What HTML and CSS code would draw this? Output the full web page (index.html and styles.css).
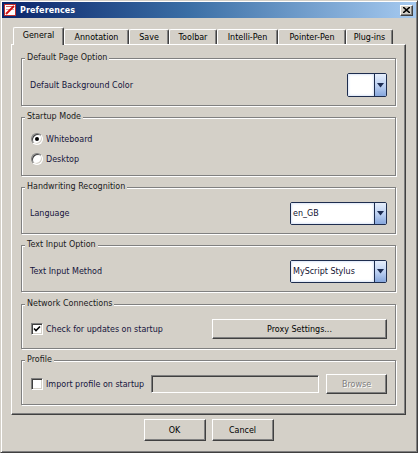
FILE: index.html
```html
<!DOCTYPE html>
<html>
<head>
<meta charset="utf-8">
<title>Preferences</title>
<link rel="stylesheet" href="styles.css">
</head>
<body>
<div class="window">
  <div class="titlebar">
    <svg class="app-icon" width="12" height="12" viewBox="0 0 12 12">
      <rect x="0.5" y="0.5" width="11" height="11" fill="#fff" stroke="#c03030"/>
      <rect x="2" y="2" width="8" height="1" fill="#d06060"/>
      <rect x="2" y="5" width="8" height="1" fill="#e0a0a0"/>
      <line x1="2" y1="10" x2="10" y2="2" stroke="#d01010" stroke-width="2"/>
    </svg>
    <span class="title">Preferences</span>
    <span class="close-btn">
      <svg width="7" height="6" viewBox="0 0 7 6"><path d="M0 0 L7 6 M7 0 L0 6" stroke="#000" stroke-width="1.6"/></svg>
    </span>
  </div>

  <div class="tabs">
    <div class="tab tab-general active">General</div>
    <div class="tab tab-annotation">Annotation</div>
    <div class="tab tab-save">Save</div>
    <div class="tab tab-toolbar">Toolbar</div>
    <div class="tab tab-intelli">Intelli-Pen</div>
    <div class="tab tab-pointer">Pointer-Pen</div>
    <div class="tab tab-plugins">Plug-ins</div>
  </div>

  <div class="panel">
    <div class="group g1">
      <div class="legend">Default Page Option</div>
      <div class="row row-24">
        <span class="label">Default Background Color</span>
        <div class="color-picker">
          <div class="cp-field"></div>
          <div class="drop-btn"><svg width="7" height="5" viewBox="0 0 7 5"><path d="M0 0 H7 L3.5 4.5 Z" fill="#1b2b52"/></svg></div>
        </div>
      </div>
    </div>

    <div class="group g2">
      <div class="legend">Startup Mode</div>
      <div class="option">
        <span class="radio"><span class="dot"></span></span>
        <span class="label">Whiteboard</span>
      </div>
      <div class="option">
        <span class="radio"></span>
        <span class="label">Desktop</span>
      </div>
    </div>

    <div class="group g3">
      <div class="legend">Handwriting Recognition</div>
      <div class="row row-23">
        <span class="label">Language</span>
        <div class="combo">
          <div class="combo-field">en_GB</div>
          <div class="drop-btn"><svg width="7" height="5" viewBox="0 0 7 5"><path d="M0 0 H7 L3.5 4.5 Z" fill="#1b2b52"/></svg></div>
        </div>
      </div>
    </div>

    <div class="group g4">
      <div class="legend">Text Input Option</div>
      <div class="row row-23">
        <span class="label">Text Input Method</span>
        <div class="combo">
          <div class="combo-field">MyScript Stylus</div>
          <div class="drop-btn"><svg width="7" height="5" viewBox="0 0 7 5"><path d="M0 0 H7 L3.5 4.5 Z" fill="#1b2b52"/></svg></div>
        </div>
      </div>
    </div>

    <div class="group g5">
      <div class="legend">Network Connections</div>
      <div class="row row-20">
        <div class="option">
          <span class="checkbox"><svg width="8" height="8" viewBox="0 0 8 8"><path d="M1 3.5 L3 5.5 L7 1.5" fill="none" stroke="#000" stroke-width="1.6"/></svg></span>
          <span class="label">Check for updates on startup</span>
        </div>
        <div class="btn btn-proxy">Proxy Settings...</div>
      </div>
    </div>

    <div class="group g6">
      <div class="legend">Profile</div>
      <div class="row row-20">
        <div class="option">
          <span class="checkbox"></span>
          <span class="label">Import profile on startup</span>
        </div>
        <div class="textfield"></div>
        <div class="btn btn-browse disabled">Browse</div>
      </div>
    </div>
  </div>

  <div class="buttons">
    <div class="btn btn-dialog">OK</div>
    <div class="btn btn-dialog">Cancel</div>
  </div>
</div>
</body>
</html>
```

FILE: styles.css
```css
* { box-sizing: border-box; }

html, body {
  margin: 0;
  padding: 0;
  background: #d4d0c8;
}

body {
  font-family: "DejaVu Sans", "Liberation Sans", sans-serif;
  font-size: 8px;
  color: #000;
}

.window {
  width: 418px;
  height: 453px;
  background: #d4d0c8;
  border: 1px solid;
  border-color: #d4d0c8 #404040 #404040 #d4d0c8;
  box-shadow: inset 1px 1px 0 #fff, inset -1px -1px 0 #808080;
  padding: 1px;
  display: flex;
  flex-direction: column;
}

/* Title bar */
.titlebar {
  height: 16px;
  background: linear-gradient(90deg, #0a246a 0%, #3a6ea5 45%, #a6caf0 100%);
  display: flex;
  align-items: center;
  padding-left: 2px;
}

.app-icon { flex: none; }

.title {
  margin-left: 4px;
  color: #fff;
  font-weight: bold;
  font-size: 8px;
  letter-spacing: 0.1px;
}

.close-btn {
  margin-left: auto;
  margin-right: 3px;
  width: 13px;
  height: 11px;
  background: #d4d0c8;
  border: 1px solid;
  border-color: #fff #404040 #404040 #fff;
  box-shadow: inset -1px -1px 0 #808080;
  display: flex;
  align-items: center;
  justify-content: center;
}

/* Tabs */
.tabs {
  display: flex;
  align-items: flex-end;
  margin-top: 9px;
  margin-left: 11px;
  height: 17px;
  position: relative;
  z-index: 2;
}

.tab {
  height: 15px;
  display: flex;
  align-items: center;
  justify-content: center;
  background: #d4d0c8;
  border-top: 1px solid #fff;
  border-left: 1px solid #fff;
  border-right: 1px solid #404040;
  box-shadow: inset -1px 0 0 #808080;
  border-radius: 2px 2px 0 0;
  padding-top: 1px;
}

.tab.active {
  height: 18px;
  margin-bottom: -1px;
  padding-top: 0;
  padding-bottom: 2px;
}

.tab-general { width: 51px; }
.tab-annotation { width: 65px; }
.tab-save { width: 40px; }
.tab-toolbar { width: 48px; }
.tab-intelli { width: 61px; }
.tab-pointer { width: 68px; }
.tab-plugins { width: 47px; }

/* Panel */
.panel {
  margin-left: 9px;
  width: 395px;
  height: 371px;
  border: 1px solid;
  border-color: #fff #404040 #404040 #fff;
  box-shadow: inset -1px -1px 0 #808080;
  padding: 13px 9px 0 9px;
  display: flex;
  flex-direction: column;
}

.group {
  position: relative;
  border: 1px solid #808080;
  box-shadow: 1px 1px 0 #fff, inset 1px 1px 0 #fff;
  padding: 14px 8px 0 8px;
  margin-top: 11px;
}

.group.g1 { margin-top: 0; height: 48px; }
.group.g2 { height: 59px; padding-top: 13px; }
.group.g3 { height: 47px; }
.group.g4 { height: 47px; }
.group.g5 { height: 45px; margin-top: 12px; }
.group.g6 { height: 45px; padding-top: 13px; }

.legend {
  position: absolute;
  top: -7px;
  left: 3px;
  padding: 0 2px;
  line-height: 12px;
  background: #d4d0c8;
  color: #1a1a1a;
}

.label {
  color: #14143c;
  white-space: nowrap;
}

.row {
  display: flex;
  align-items: center;
  justify-content: space-between;
}

.row-24 { height: 24px; }
.row-23 { height: 23px; }
.row-20 { height: 20px; }

.option {
  display: flex;
  align-items: center;
  height: 16px;
  padding-left: 1px;
}

.g2 .option + .option { margin-top: 4px; }

/* Radio */
.radio {
  width: 12px;
  height: 12px;
  border-radius: 50%;
  background: #fff;
  border: 1px solid;
  border-color: #808080 #fff #fff #808080;
  box-shadow: inset 1px 1px 0 #404040, inset -1px -1px 0 #d4d0c8;
  display: flex;
  align-items: center;
  justify-content: center;
  margin-right: 3px;
  flex: none;
}

.dot {
  width: 4px;
  height: 4px;
  border-radius: 50%;
  background: #000;
}

/* Checkbox */
.checkbox {
  width: 12px;
  height: 12px;
  background: #fff;
  border: 1px solid;
  border-color: #808080 #fff #fff #808080;
  box-shadow: inset 1px 1px 0 #404040, inset -1px -1px 0 #d4d0c8;
  display: flex;
  align-items: center;
  justify-content: center;
  margin-right: 3px;
  flex: none;
}

/* Combo & color picker */
.combo, .color-picker {
  display: flex;
  border: 1px solid #1e2d4e;
  border-radius: 2px;
  background: #fff;
  overflow: hidden;
}

.combo { width: 97px; height: 23px; }
.color-picker { width: 40px; height: 24px; }

.combo-field, .cp-field {
  flex: 1;
  background: #fff;
  box-shadow: inset 0 0 3px #b9cdef;
  display: flex;
  align-items: center;
  padding-left: 2px;
  color: #101030;
  white-space: nowrap;
}

.drop-btn {
  width: 12px;
  border-left: 1px solid #1e2d4e;
  background: linear-gradient(#e6eefb, #b9cef1 55%, #86a6dc);
  display: flex;
  align-items: center;
  justify-content: center;
}

/* Buttons */
.btn {
  display: flex;
  align-items: center;
  justify-content: center;
  background: #d4d0c8;
  border: 1px solid;
  border-color: #fff #404040 #404040 #fff;
  box-shadow: inset -1px -1px 0 #808080;
  color: #000;
  white-space: nowrap;
}

.btn-proxy { width: 175px; height: 20px; }

.textfield {
  margin-left: auto;
  width: 168px;
  height: 18px;
  background: #d4d0c8;
  border: 1px solid;
  border-color: #808080 #fff #fff #808080;
  box-shadow: inset 1px 1px 0 #404040, inset -1px -1px 0 #d4d0c8;
}

.btn-browse {
  margin-left: 7px;
  width: 61px;
  height: 20px;
}

.btn.disabled {
  color: #808080;
  text-shadow: 1px 1px 0 #fff;
}

.buttons {
  display: flex;
  justify-content: center;
  gap: 6px;
  margin-top: 4px;
  padding-right: 1px;
}

.btn-dialog {
  width: 62px;
  height: 22px;
}
```
